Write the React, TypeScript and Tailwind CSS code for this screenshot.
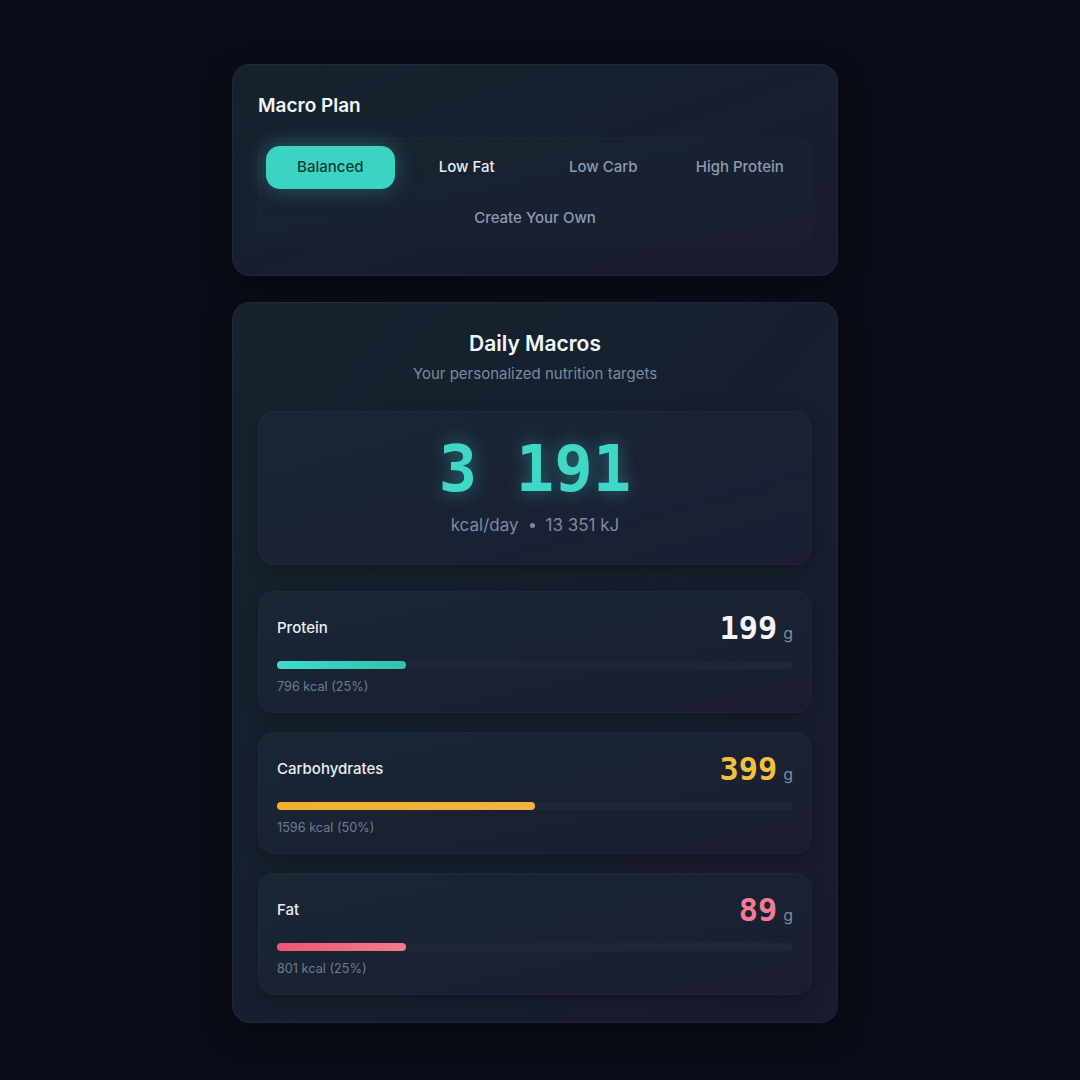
const plans = ['Balanced', 'Low Fat', 'Low Carb', 'High Protein']

const macros = [
  {
    name: 'Protein',
    grams: 199,
    kcal: '796 kcal (25%)',
    pct: 25,
    valueClass: 'text-[#f1f5f9]',
    barClass: 'bg-gradient-to-r from-[#3fdcc8] to-[#35bfae]',
  },
  {
    name: 'Carbohydrates',
    grams: 399,
    kcal: '1596 kcal (50%)',
    pct: 50,
    valueClass: 'text-[#f6be3f]',
    barClass: 'bg-gradient-to-r from-[#f4b02c] to-[#eeb443]',
  },
  {
    name: 'Fat',
    grams: 89,
    kcal: '801 kcal (25%)',
    pct: 25,
    valueClass: 'text-[#f27c91]',
    barClass: 'bg-gradient-to-r from-[#ef5570] to-[#f27a8e]',
  },
]

function MacroRow({ m }: { m: (typeof macros)[number] }) {
  return (
    <div className="rounded-2xl bg-gradient-to-br from-[#192733] to-[#1a1d30] px-[19px] pt-[18px] pb-[18px] shadow-[inset_0_0_0_1px_rgba(255,255,255,0.02),0_6px_18px_rgba(0,0,0,0.25)]">
      <div className="flex h-[38px] items-center justify-between">
        <span className="text-[15px] font-medium text-[#e9eef5]">{m.name}</span>
        <span className="flex items-baseline gap-[6px]">
          <span
            className={`text-[32px] leading-none font-bold ${m.valueClass}`}
            style={{ fontFamily: '"DejaVu Sans Mono", monospace' }}
          >
            {m.grams}
          </span>
          <span className="text-[16px] text-[#7d8aa0]">g</span>
        </span>
      </div>
      <div className="mt-[14px] h-2 rounded-full bg-[#1f2638]">
        <div className={`h-2 rounded-full ${m.barClass}`} style={{ width: `${m.pct}%` }} />
      </div>
      <div className="mt-[10px] text-[12.7px] leading-4 text-[#6e7c92]">{m.kcal}</div>
    </div>
  )
}

export default function App() {
  return (
    <div
      className="min-h-[1080px] w-full bg-[#0a0d17] pt-16 pb-14"
      style={{ fontFamily: 'Inter, "Noto Sans", sans-serif' }}
    >
      <div className="ml-[232px] flex w-[606px] flex-col gap-[26px]">
        {/* plan picker */}
        <div className="rounded-[18px] bg-gradient-to-br from-[#15232e] to-[#191b2e] px-[26px] pt-[28px] pb-[28px] shadow-[inset_0_0_0_1px_rgba(255,255,255,0.04),0_10px_30px_rgba(0,0,0,0.35)]">
          <h2 className="text-[19px] leading-7 font-semibold text-[#f1f5f9]">Macro Plan</h2>
          <div className="mt-[18px] grid grid-cols-4 gap-2 rounded-2xl bg-gradient-to-br from-[#172530] to-[#1a1d2f] p-2 shadow-[inset_0_0_0_1px_rgba(255,255,255,0.02)]">
            {plans.map((p, i) => (
              <button
                key={p}
                className={
                  i === 0
                    ? 'h-[43px] rounded-[14px] bg-[#3dd3c2] text-[15px] font-medium text-[#0f3b3a] shadow-[0_0_22px_rgba(61,211,194,0.35)]'
                    : i === 1
                      ? 'h-[43px] rounded-[14px] text-[15px] font-medium text-[#e6ebf2]'
                      : 'h-[43px] rounded-[14px] text-[15px] font-medium text-[#8d9ab0]'
                }
              >
                {p}
              </button>
            ))}
            <button className="col-span-4 h-[43px] rounded-[14px] text-[15px] font-medium text-[#8d9ab0]">
              Create Your Own
            </button>
          </div>
        </div>

        {/* daily macros */}
        <div className="rounded-[18px] bg-gradient-to-br from-[#15232e] to-[#191b2e] px-[26px] pt-[28px] pb-[28px] shadow-[inset_0_0_0_1px_rgba(255,255,255,0.04),0_10px_30px_rgba(0,0,0,0.35)]">
          <h2 className="text-center text-[21px] leading-7 font-semibold text-[#f1f5f9]">Daily Macros</h2>
          <p className="mt-1.5 text-center text-[15px] leading-5 text-[#7b899e]">
            Your personalized nutrition targets
          </p>

          <div className="mt-[27px] flex flex-col items-center rounded-2xl bg-gradient-to-br from-[#192634] to-[#1b1e33] pt-[26px] pb-[28px] shadow-[inset_0_0_0_1px_rgba(255,255,255,0.02),0_6px_18px_rgba(0,0,0,0.25)]">
            <div
              className="text-[64px] leading-[64px] font-bold text-[#3fd8c6] [text-shadow:0_0_18px_rgba(63,216,198,0.45)]"
              style={{ fontFamily: '"DejaVu Sans Mono", monospace' }}
            >
              3 191
            </div>
            <div className="mt-3 flex items-center gap-[11px] text-[17px] leading-6 text-[#7d8aa0]">
              <span>kcal/day</span>
              <span className="h-[5px] w-[5px] rounded-full bg-[#7d8aa0]" />
              <span>13 351 kJ</span>
            </div>
          </div>

          <div className="mt-[26px] flex flex-col gap-[19px]">
            {macros.map((m) => (
              <MacroRow key={m.name} m={m} />
            ))}
          </div>
        </div>
      </div>
    </div>
  )
}
